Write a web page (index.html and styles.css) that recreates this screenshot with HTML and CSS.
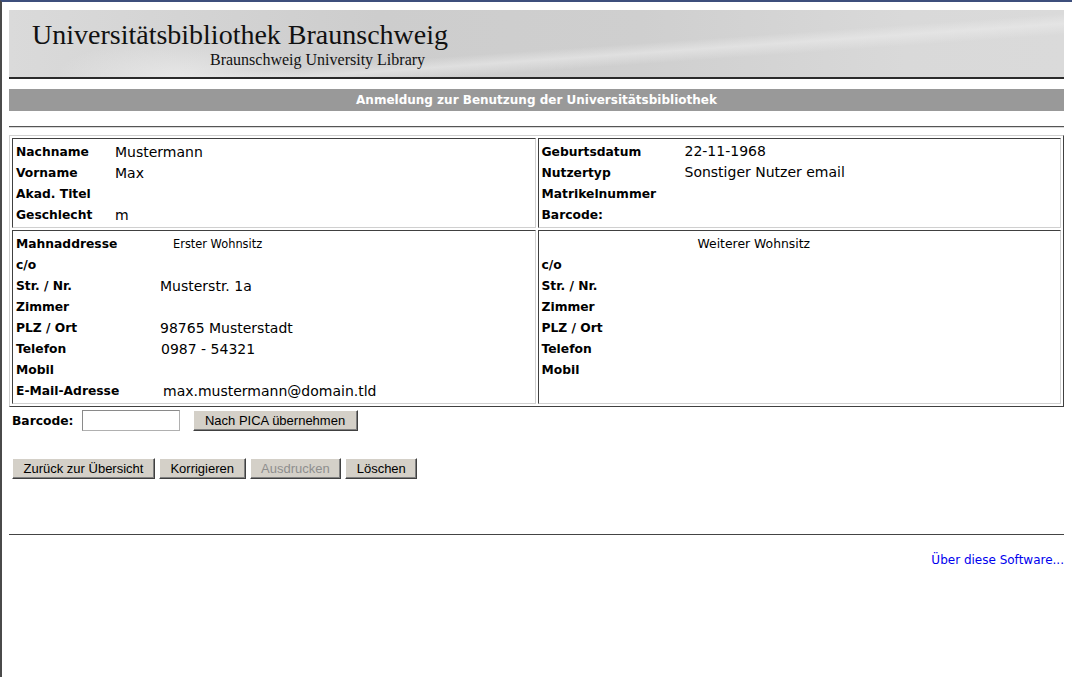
FILE: index.html
```html
<!DOCTYPE html>
<html lang="de">
<head>
<meta charset="utf-8">
<title>Anmeldung zur Benutzung der Universitätsbibliothek</title>
<link rel="stylesheet" href="styles.css">
</head>
<body>
<div class="page">
  <header class="banner">
    <div class="banner-title">Universitätsbibliothek Braunschweig</div>
    <div class="banner-sub">Braunschweig University Library</div>
  </header>
  <div class="titlebar">Anmeldung zur Benutzung der Universitätsbibliothek</div>
  <hr class="rule rule-top">
  <table class="record">
    <tr>
      <td>
        <div class="fields f-person">
          <span class="lbl">Nachname</span><span class="val">Mustermann</span>
          <span class="lbl">Vorname</span><span class="val">Max</span>
          <span class="lbl">Akad. Titel</span><span class="val"></span>
          <span class="lbl">Geschlecht</span><span class="val">m</span>
        </div>
      </td>
      <td>
        <div class="fields f-meta">
          <span class="lbl">Geburtsdatum</span><span class="val">22-11-1968</span>
          <span class="lbl">Nutzertyp</span><span class="val">Sonstiger Nutzer email</span>
          <span class="lbl">Matrikelnummer</span><span class="val"></span>
          <span class="lbl">Barcode:</span><span class="val"></span>
        </div>
      </td>
    </tr>
    <tr>
      <td>
        <div class="fields f-addr1">
          <span class="lbl">Mahnaddresse</span><span class="sub sub1">Erster Wohnsitz</span>
          <span class="lbl">c/o</span><span class="val"></span>
          <span class="lbl">Str. / Nr.</span><span class="val">Musterstr. 1a</span>
          <span class="lbl">Zimmer</span><span class="val"></span>
          <span class="lbl">PLZ / Ort</span><span class="val">98765 Musterstadt</span>
          <span class="lbl">Telefon</span><span class="val v-tel">0987 - 54321</span>
          <span class="lbl">Mobil</span><span class="val"></span>
          <span class="lbl">E-Mail-Adresse</span><span class="val v-mail">max.mustermann@domain.tld</span>
        </div>
      </td>
      <td>
        <div class="fields f-addr2">
          <span class="sub sub2">Weiterer Wohnsitz</span>
          <span class="lbl">c/o</span><span class="val"></span>
          <span class="lbl">Str. / Nr.</span><span class="val"></span>
          <span class="lbl">Zimmer</span><span class="val"></span>
          <span class="lbl">PLZ / Ort</span><span class="val"></span>
          <span class="lbl">Telefon</span><span class="val"></span>
          <span class="lbl">Mobil</span><span class="val"></span>
        </div>
      </td>
    </tr>
  </table>
  <form class="barcode-row">
    <label class="lbl" for="bc">Barcode:</label>
    <input id="bc" class="bc-input" type="text">
    <button type="button" class="btn btn-pica">Nach PICA übernehmen</button>
  </form>
  <div class="actions">
    <button type="button" class="btn">Zurück zur Übersicht</button>
    <button type="button" class="btn">Korrigieren</button>
    <button type="button" class="btn" disabled>Ausdrucken</button>
    <button type="button" class="btn">Löschen</button>
  </div>
  <hr class="rule rule-bottom">
  <div class="footer"><a href="#" class="about">Über diese Software...</a></div>
</div>
</body>
</html>
```
FILE: styles.css
```css
html, body {
  margin: 0;
  padding: 0;
  background: #fff;
}
body {
  border-top: 2px solid #3d4f7c;
  border-left: 2px solid #4a4a4a;
  min-height: 677px;
  box-sizing: border-box;
  font-family: "DejaVu Sans", Tahoma, sans-serif;
  color: #000;
}
.page {
  padding: 8px 8px 0 7px;
}
.banner {
  height: 67px;
  border-bottom: 2px solid #2b2b2b;
  background:
    radial-gradient(ellipse 180px 60px at 170px 70px, rgba(240,240,240,0.7), rgba(240,240,240,0) 70%),
    linear-gradient(176deg, rgba(255,255,255,0) 55%, rgba(235,235,235,0.6) 62%, rgba(255,255,255,0) 70%),
    linear-gradient(to right, #dadada 0%, #cdcdcd 35%, #cfcfcf 60%, #d9d9d9 85%, #dadada 100%);
}
.banner-title {
  font-family: "Liberation Serif", "Times New Roman", serif;
  font-size: 28px;
  line-height: 30px;
  padding: 10px 0 0 23px;
  color: #111;
}
.banner-sub {
  font-family: "Liberation Serif", "Times New Roman", serif;
  font-size: 16px;
  line-height: 17px;
  padding: 1px 0 0 201px;
  color: #111;
}
.titlebar {
  margin-top: 10px;
  height: 22px;
  line-height: 22px;
  background: #999999;
  color: #fff;
  font-weight: bold;
  font-size: 12px;
  text-align: center;
}
.rule {
  border: 0;
  height: 1px;
  margin: 0;
  background: #555;
  border-bottom: 1px solid #d8d8d8;
}
.rule-top {
  margin-top: 15px;
}
.record {
  margin-top: 7px;
  width: 100%;
  border-collapse: separate;
  border-spacing: 2px;
  border-top: 1px solid #d0d0d0;
  border-left: 1px solid #d0d0d0;
  border-right: 1px solid #404040;
  border-bottom: 1px solid #404040;
}
.record td {
  vertical-align: top;
  width: 50%;
  padding: 2px 3px 2px 3px;
  border-top: 1px solid #404040;
  border-left: 1px solid #404040;
  border-right: 1px solid #d0d0d0;
  border-bottom: 1px solid #d0d0d0;
}
.fields {
  display: grid;
  grid-auto-rows: 21px;
  align-items: center;
}
.f-person { grid-template-columns: 99px 1fr; }
.f-meta { grid-template-columns: 143px 1fr; }
.f-addr1 { grid-template-columns: 144px 1fr; }
.f-addr2 { grid-template-columns: 144px 1fr; }
.lbl {
  font-weight: bold;
  font-size: 12.3px;
  white-space: nowrap;
}
.val {
  font-size: 14px;
  white-space: nowrap;
}
.f-meta .val { position: relative; top: -1px; }
.v-tel { padding-left: 1px; }
.v-mail { padding-left: 3px; }
.sub {
  white-space: nowrap;
}
.sub1 {
  font-size: 11.4px;
  padding-left: 13px;
}
.sub2 {
  font-size: 12.4px;
  grid-column: 1 / -1;
  padding-left: 156px;
}
.barcode-row {
  display: flex;
  align-items: center;
  margin: 2px 0 0 3px;
  height: 23px;
}
.bc-input {
  margin: 0 0 0 8px;
  width: 98px;
  height: 21px;
  box-sizing: border-box;
  border: 1px solid #b0b0b0;
  border-top-color: #8a8a8a;
  border-left-color: #8a8a8a;
  padding: 0 2px;
}
.btn {
  font-family: "Liberation Sans", Arial, sans-serif;
  font-size: 13px;
  height: 21px;
  line-height: 17px;
  padding: 0 10.5px;
  background: #d4d0c8;
  color: #000;
  border: 1px solid;
  border-color: #ffffff #404040 #404040 #ffffff;
  box-shadow: inset -1px -1px 0 #808080;
  box-sizing: border-box;
  margin: 0;
}
.btn:disabled {
  color: #8e8e8e;
}
.btn-pica {
  margin-left: 13px;
  width: 165px;
}
.actions {
  display: flex;
  gap: 4px;
  margin: 26px 0 0 3px;
}
.rule-bottom {
  margin-top: 55px;
  border-bottom: 0;
  background: #444;
}
.footer {
  text-align: right;
  margin-top: 17px;
  line-height: 14px;
}
.about {
  color: #0000ee;
  text-decoration: none;
  font-size: 12px;
}
```
